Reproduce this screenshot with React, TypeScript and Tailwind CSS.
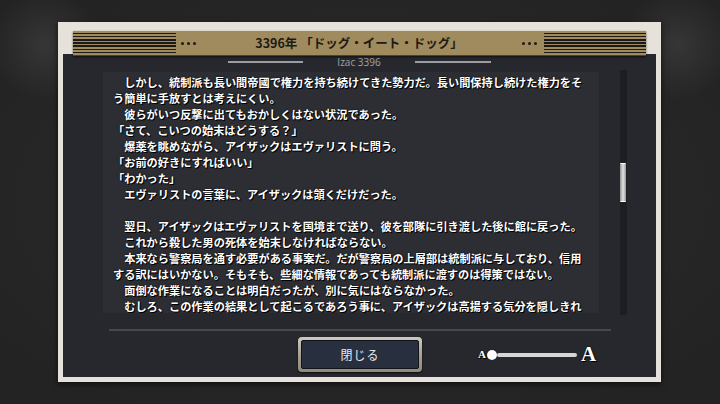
const lines = [
  "　しかし、統制派も長い間帝國で権力を持ち続けてきた勢力だ。長い間保持し続けた権力をそ",
  "う簡単に手放すとは考えにくい。",
  "　彼らがいつ反撃に出てもおかしくはない状況であった。",
  "「さて、こいつの始末はどうする？」",
  "　爆薬を眺めながら、アイザックはエヴァリストに問う。",
  "「お前の好きにすればいい」",
  "「わかった」",
  "　エヴァリストの言葉に、アイザックは頷くだけだった。",
  "",
  "　翌日、アイザックはエヴァリストを国境まで送り、彼を部隊に引き渡した後に館に戻った。",
  "　これから殺した男の死体を始末しなければならない。",
  "　本来なら警察局を通す必要がある事案だ。だが警察局の上層部は統制派に与しており、信用",
  "する訳にはいかない。そもそも、些細な情報であっても統制派に渡すのは得策ではない。",
  "　面倒な作業になることは明白だったが、別に気にはならなかった。",
  "　むしろ、この作業の結果として起こるであろう事に、アイザックは高揚する気分を隠しきれ",
];

function Stripes({ width }: { width: string }) {
  return (
    <div className={`flex h-full flex-col justify-evenly ${width}`}>
      {[0, 1, 2, 3, 4, 5, 6].map((i) => (
        <div key={i} className="h-[1.6px] bg-[#1c1a16]" />
      ))}
    </div>
  );
}

function Dots() {
  return (
    <div className="flex gap-[3px]">
      <div className="h-[3px] w-[3px] rounded-full bg-[#1e1a14]" />
      <div className="h-[3px] w-[3px] rounded-full bg-[#1e1a14]" />
      <div className="h-[3px] w-[3px] rounded-full bg-[#1e1a14]" />
    </div>
  );
}

export default function App() {
  return (
    <div className="h-[404px] w-[720px] overflow-hidden bg-[#282828] bg-[radial-gradient(circle_at_45px_45px,#363636_0px,transparent_55px),radial-gradient(circle_at_678px_45px,#363636_0px,transparent_55px),radial-gradient(ellipse_at_center,#2d2d2d_0%,#232323_90%)] pl-[58px] pt-[22px] font-['Noto_Sans_CJK_JP',sans-serif]">
      <div className="flex h-[360px] w-[603px] flex-col bg-[#e6e1da] px-[5px] pb-[5px] shadow-[0_2px_6px_rgba(0,0,0,0.6)]">
        {/* header */}
        <div className="h-[32px] px-[10px] pt-[9px]">
          <div className="relative z-10 flex h-[25px] items-center border-b border-[#4f432c] bg-[#a08b5f] shadow-[0_1px_2px_rgba(0,0,0,0.6)]">
            <Stripes width="w-[103px]" />
            <div className="ml-[5px]">
              <Dots />
            </div>
            <div className="flex-1 text-center text-[12.5px] font-bold leading-none text-[#1e1a14]">
              3396年 「ドッグ・イート・ドッグ」
            </div>
            <Dots />
            <div className="ml-[7px] h-full">
              <Stripes width="w-[102px]" />
            </div>
          </div>
        </div>

        {/* panel */}
        <div className="flex flex-1 flex-col bg-[#27282d]">
          <div className="flex h-[16px] items-center justify-center">
            <div className="h-[1.5px] w-[75px] bg-[#9a9da3]" />
            <div className="mx-[34px] font-['Open_Sans',sans-serif] text-[10px] leading-none text-[#a3a3a3]">
              Izac 3396
            </div>
            <div className="h-[1.5px] w-[76px] bg-[#9a9da3]" />
          </div>

          <div className="flex items-start pl-[40px]">
            <div className="mt-[2px] h-[241px] w-[496px] overflow-hidden bg-[#2d2e33] pl-[10px] pt-[2px] text-[11.2px] font-bold leading-[16px] text-white [text-shadow:1px_1px_0_#000,0_0_2px_#000]">
              {lines.map((line, i) => (
                <div key={i} className="h-[16px] whitespace-nowrap">
                  {line}
                </div>
              ))}
            </div>
            <div className="ml-[21px] h-[245px] w-[7px] bg-[#1d1e22]">
              <div className="mt-[93px] h-[39px] w-[6px] rounded-[1px] border-y border-white bg-gradient-to-r from-[#8e8e8e] via-[#e2e2e2] to-[#9a9a9a]" />
            </div>
          </div>

          <div className="ml-[46px] mt-[14px] h-[2px] w-[502px] bg-[#454850]" />

          <div className="mt-[6px] flex items-center">
            <div className="ml-[235px] flex h-[35px] w-[124px] items-center justify-center rounded-[4px] bg-gradient-to-b from-[#cfc9bd] via-[#a9a294] to-[#8f897c] p-[3px] shadow-[0_1px_2px_rgba(0,0,0,0.7)]">
              <div className="flex h-full w-full items-center justify-center rounded-[2px] border border-[#11141b] bg-[#283040] text-[12px] tracking-[1px] text-[#e8e8e8]">
                閉じる
              </div>
            </div>
            <div className="ml-[56px] flex items-center font-['Liberation_Serif',serif] font-bold text-white [text-shadow:1px_1px_0_#000,0_0_2px_#000]">
              <span className="text-[11px] leading-none">A</span>
              <div className="relative ml-[1px] flex w-[90px] items-center">
                <div className="h-[10px] w-[10px] shrink-0 rounded-full bg-white shadow-[0_0_1px_#000]" />
                <div className="h-[4px] flex-1 rounded-full bg-[#d6d6d6]" />
              </div>
              <span className="ml-[4px] text-[21px] leading-none">A</span>
            </div>
          </div>
        </div>
      </div>
    </div>
  );
}
